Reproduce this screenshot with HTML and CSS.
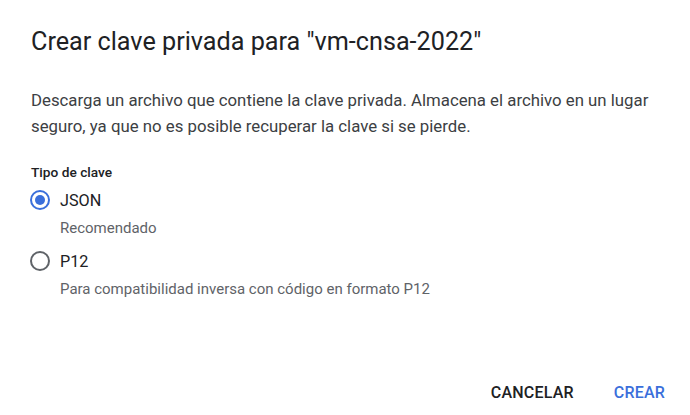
FILE: index.html
```html
<!DOCTYPE html>
<html lang="es">
<head>
<meta charset="utf-8">
<link rel="stylesheet" href="styles.css">
</head>
<body>
<div class="dialog">
  <h1 class="title">Crear clave privada para "vm-cnsa-2022"</h1>
  <p class="desc">Descarga un archivo que contiene la clave privada. Almacena el archivo en un lugar seguro, ya que no es posible recuperar la clave si se pierde.</p>
  <div class="group">
    <div class="label">Tipo de clave</div>
    <div class="option">
      <span class="radio checked"><span class="dot"></span></span>
      <span class="opt-text">JSON</span>
    </div>
    <div class="hint">Recomendado</div>
    <div class="option">
      <span class="radio"></span>
      <span class="opt-text">P12</span>
    </div>
    <div class="hint">Para compatibilidad inversa con código en formato P12</div>
  </div>
  <div class="actions">
    <button class="btn">CANCELAR</button>
    <button class="btn primary">CREAR</button>
  </div>
</div>
</body>
</html>
```
FILE: styles.css
```css
html, body {
  margin: 0;
  padding: 0;
  background: #fff;
}
body {
  font-family: Roboto, "Noto Sans", sans-serif;
  color: #202124;
  width: 690px;
  height: 415px;
  overflow: hidden;
}
.dialog {
  padding: 24px 17px 0 31px;
  display: flex;
  flex-direction: column;
  height: 415px;
  box-sizing: border-box;
}
.title {
  font-size: 25.2px;
  font-weight: 400;
  line-height: 36px;
  margin: 0;
  color: #202124;
}
.desc {
  font-size: 16.8px;
  line-height: 26px;
  margin: 27px 0 0 0;
  color: #3c4043;
  max-width: 630px;
}
.group {
  margin-top: 23px;
  display: flex;
  flex-direction: column;
}
.label {
  font-size: 13.7px;
  font-weight: 500;
  line-height: 20px;
  color: #202124;
  margin-bottom: 4px;
}
.option {
  display: flex;
  align-items: center;
  height: 28px;
  margin-left: -1px;
}
.radio {
  width: 16px;
  height: 16px;
  border: 2px solid #5f6368;
  border-radius: 50%;
  display: flex;
  align-items: center;
  justify-content: center;
  box-sizing: content-box;
}
.radio.checked {
  border-color: #3a6fdb;
}
.dot {
  width: 10px;
  height: 10px;
  border-radius: 50%;
  background: #3a6fdb;
}
.opt-text {
  margin-left: 10px;
  font-size: 16.2px;
  color: #202124;
}
.hint {
  margin-left: 29px;
  font-size: 15px;
  line-height: 28px;
  color: #5f6368;
  margin-bottom: 5px;
}
.actions {
  margin-top: auto;
  display: flex;
  justify-content: flex-end;
  gap: 24px;
  padding: 0 0 5px 0;
}
.btn {
  font-family: Roboto, "Noto Sans", sans-serif;
  font-size: 16px;
  font-weight: 500;
  letter-spacing: 0.2px;
  background: none;
  border: none;
  padding: 0 8px;
  height: 36px;
  color: #202124;
}
.btn.primary {
  color: #3a6fdb;
}
```
